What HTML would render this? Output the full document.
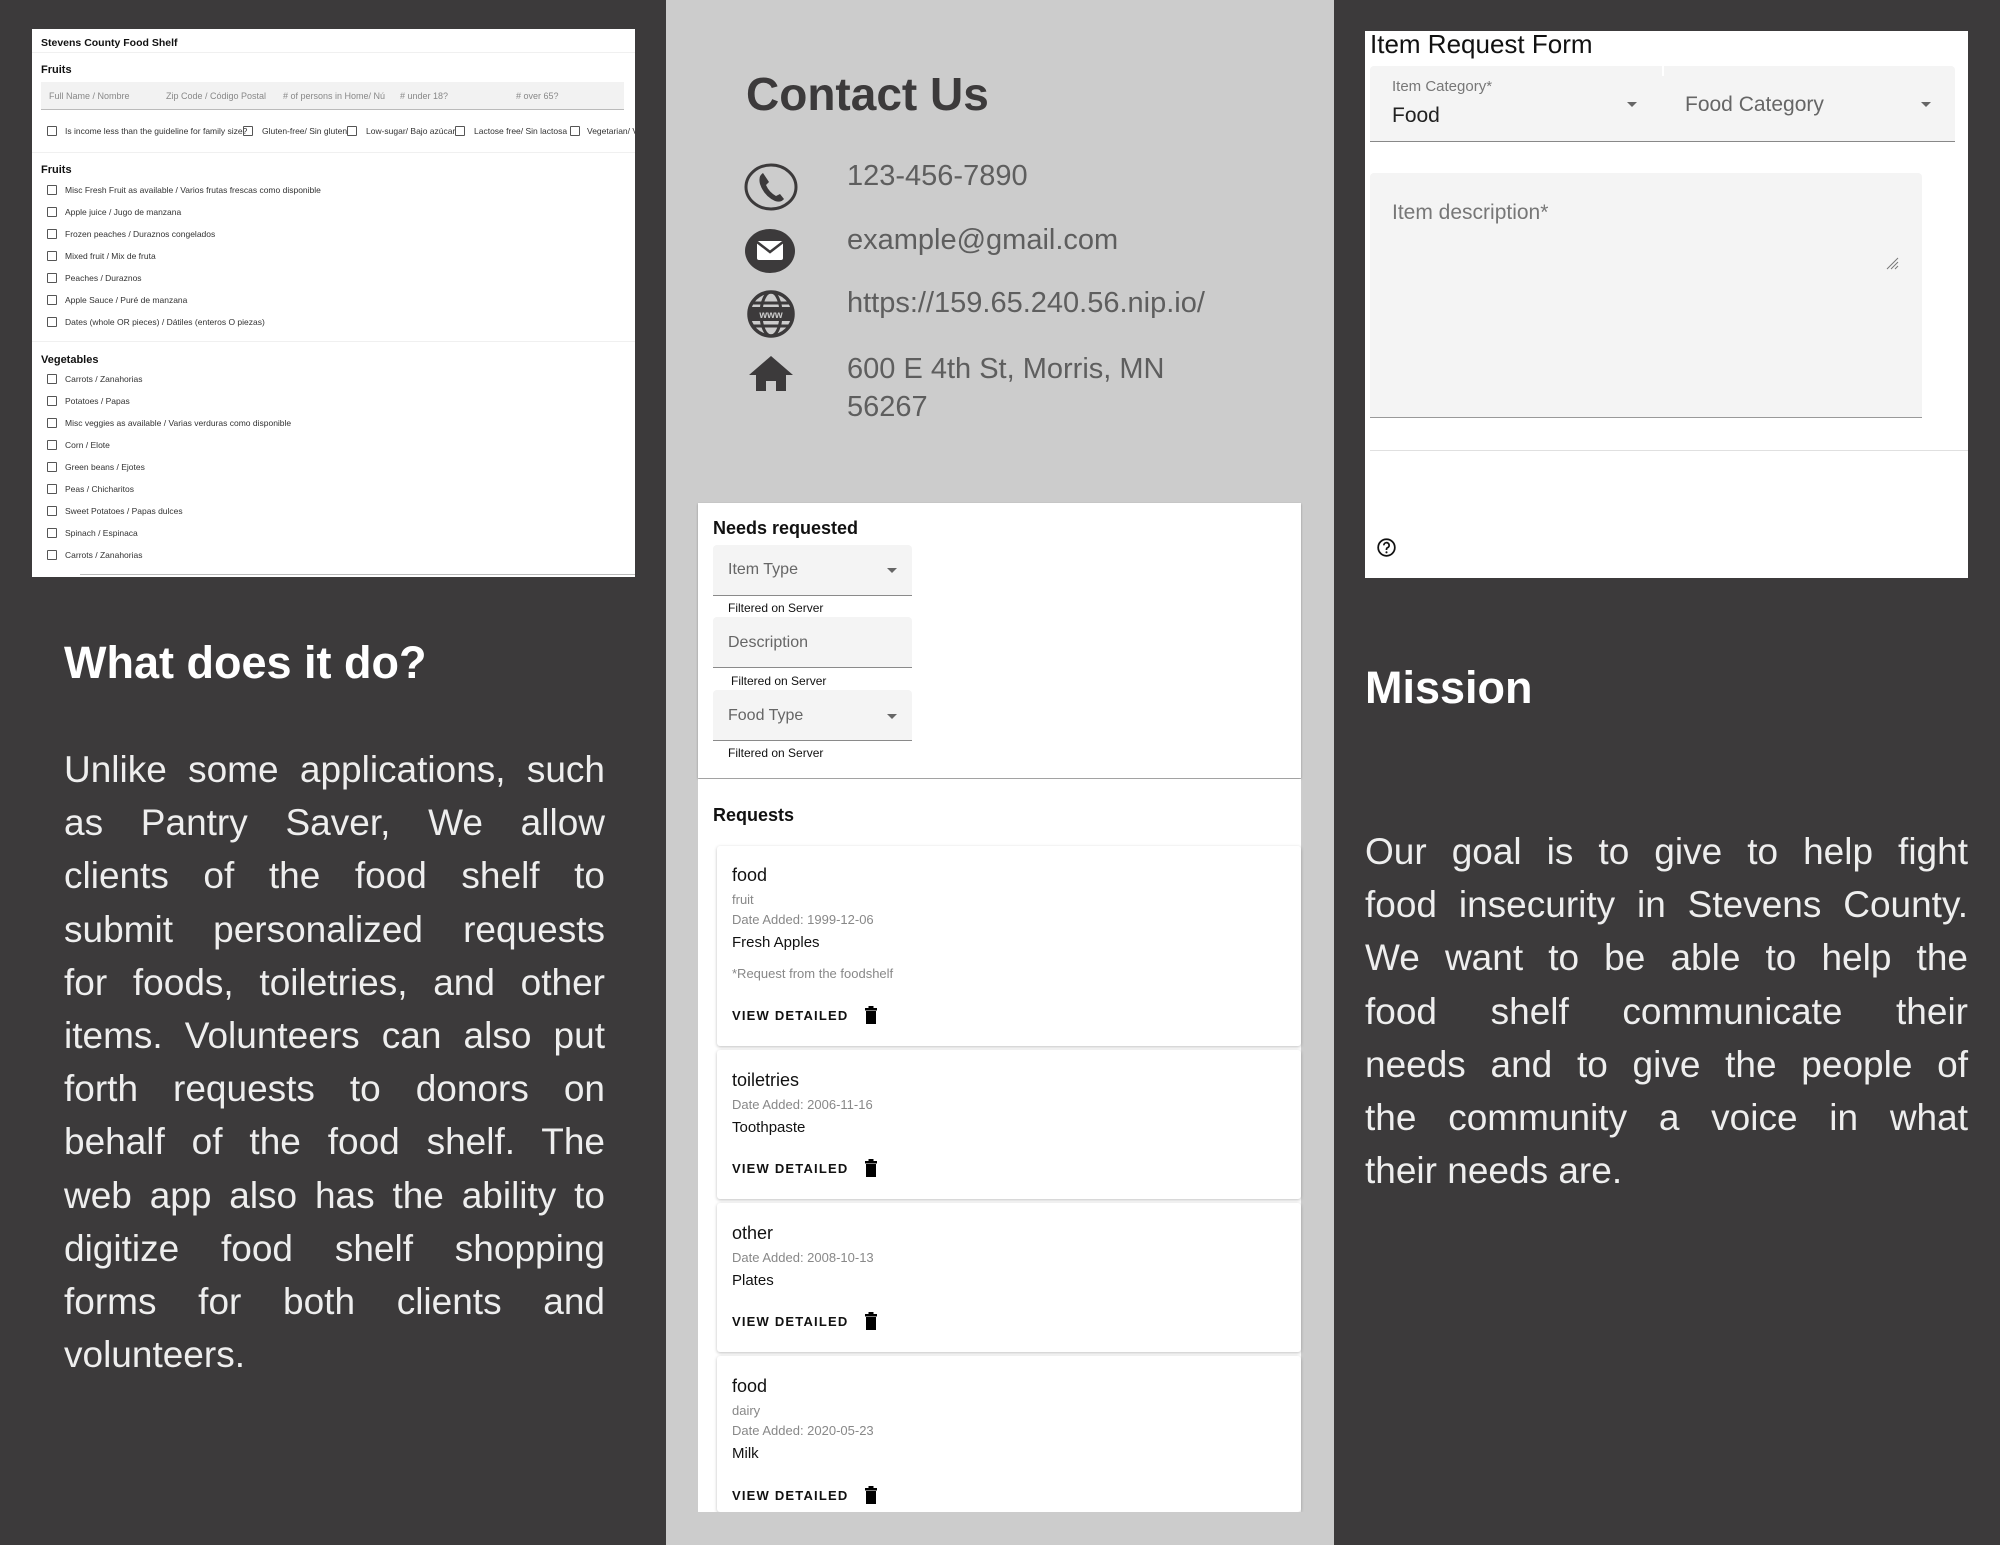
<!DOCTYPE html>
<html><head><meta charset="utf-8"><style>
*{margin:0;padding:0;box-sizing:border-box}
body{width:2000px;height:1545px;position:relative;overflow:hidden;background:#3c3a3b;font-family:"Liberation Sans",sans-serif}
.a{position:absolute;white-space:nowrap}
.cb{position:absolute;width:10px;height:10px;border:1.3px solid #555;border-radius:1px}
.li{position:absolute;font-size:8.5px;color:#333;line-height:10px}
.jp{position:absolute;color:#eeeeee;font-size:37px;line-height:53.2px}
.jp span{display:block;text-align:justify;text-align-last:justify;white-space:nowrap}
.jp span.l{text-align-last:left}
.fld{position:absolute;background:#f4f4f4;border-bottom:1.5px solid #8a8a8a;border-radius:4px 4px 0 0}
.arr{position:absolute;width:0;height:0;border-left:5px solid transparent;border-right:5px solid transparent;border-top:5px solid #666}
.card{position:absolute;left:717px;width:584px;background:#fff;box-shadow:0 1px 3px rgba(0,0,0,.25);border-radius:3px}
.t1{font-size:18px;color:#111;font-weight:500}
.g{font-size:13px;color:#888}
.b{font-size:15px;color:#111}
.vd{font-size:13px;font-weight:bold;letter-spacing:1.2px;color:#111}
</style></head><body>

<div class="a" style="left:666px;top:0;width:668px;height:1545px;background:#cccccc"></div>

<div class="a" style="left:32px;top:29px;width:603px;height:548px;background:#fff;overflow:hidden">
  <div class="a" style="left:9px;top:8px;font-size:10.5px;font-weight:bold;color:#111">Stevens County Food Shelf</div>
  <div class="a" style="left:0;top:23px;width:603px;height:1px;background:#f0f0f0"></div>
  <div class="a" style="left:9px;top:35px;font-size:11px;font-weight:bold;color:#111">Fruits</div>
  <div class="a" style="left:9px;top:53px;width:583px;height:28px;background:#f2f2f2;border-bottom:1px solid #bbb"></div>
  <div class="a" style="left:17px;top:62px;font-size:9px;color:#888">Full Name / Nombre</div>
  <div class="a" style="left:134px;top:62px;font-size:9px;color:#888">Zip Code / Código Postal</div>
  <div class="a" style="left:251px;top:62px;font-size:9px;color:#888"># of persons in Home/ Nú</div>
  <div class="a" style="left:368px;top:62px;font-size:9px;color:#888"># under 18?</div>
  <div class="a" style="left:484px;top:62px;font-size:9px;color:#888"># over 65?</div>
  <div class="cb" style="left:15px;top:97px"></div><div class="li" style="left:33px;top:97px">Is income less than the guideline for family size?</div>
  <div class="cb" style="left:211px;top:97px"></div><div class="li" style="left:230px;top:97px">Gluten-free/ Sin gluten</div>
  <div class="cb" style="left:315px;top:97px"></div><div class="li" style="left:334px;top:97px">Low-sugar/ Bajo azúcar</div>
  <div class="cb" style="left:423px;top:97px"></div><div class="li" style="left:442px;top:97px">Lactose free/ Sin lactosa</div>
  <div class="cb" style="left:538px;top:97px"></div><div class="li" style="left:555px;top:97px">Vegetarian/ Vegetariano</div>
  <div class="a" style="left:0;top:123px;width:603px;height:1px;background:#f0f0f0"></div>
  <div class="a" style="left:9px;top:135px;font-size:11px;font-weight:bold;color:#111">Fruits</div>
  <div class="cb" style="left:15px;top:156px"></div><div class="li" style="left:33px;top:156px">Misc Fresh Fruit as available / Varios frutas frescas como disponible</div>
  <div class="cb" style="left:15px;top:178px"></div><div class="li" style="left:33px;top:178px">Apple juice / Jugo de manzana</div>
  <div class="cb" style="left:15px;top:200px"></div><div class="li" style="left:33px;top:200px">Frozen peaches / Duraznos congelados</div>
  <div class="cb" style="left:15px;top:222px"></div><div class="li" style="left:33px;top:222px">Mixed fruit / Mix de fruta</div>
  <div class="cb" style="left:15px;top:244px"></div><div class="li" style="left:33px;top:244px">Peaches / Duraznos</div>
  <div class="cb" style="left:15px;top:266px"></div><div class="li" style="left:33px;top:266px">Apple Sauce / Puré de manzana</div>
  <div class="cb" style="left:15px;top:288px"></div><div class="li" style="left:33px;top:288px">Dates (whole OR pieces) / Dátiles (enteros O piezas)</div>
  <div class="a" style="left:0;top:312px;width:603px;height:1px;background:#f0f0f0"></div>
  <div class="a" style="left:9px;top:325px;font-size:11px;font-weight:bold;color:#111">Vegetables</div>
  <div class="cb" style="left:15px;top:345px"></div><div class="li" style="left:33px;top:345px">Carrots / Zanahorias</div>
  <div class="cb" style="left:15px;top:367px"></div><div class="li" style="left:33px;top:367px">Potatoes / Papas</div>
  <div class="cb" style="left:15px;top:389px"></div><div class="li" style="left:33px;top:389px">Misc veggies as available / Varias verduras como disponible</div>
  <div class="cb" style="left:15px;top:411px"></div><div class="li" style="left:33px;top:411px">Corn / Elote</div>
  <div class="cb" style="left:15px;top:433px"></div><div class="li" style="left:33px;top:433px">Green beans / Ejotes</div>
  <div class="cb" style="left:15px;top:455px"></div><div class="li" style="left:33px;top:455px">Peas / Chicharitos</div>
  <div class="cb" style="left:15px;top:477px"></div><div class="li" style="left:33px;top:477px">Sweet Potatoes / Papas dulces</div>
  <div class="cb" style="left:15px;top:499px"></div><div class="li" style="left:33px;top:499px">Spinach / Espinaca</div>
  <div class="cb" style="left:15px;top:521px"></div><div class="li" style="left:33px;top:521px">Carrots / Zanahorias</div>
  <div class="a" style="left:48px;top:545px;width:555px;height:1px;background:#bbb"></div>
</div>

<div class="a" style="left:64px;top:637px;font-size:45px;font-weight:bold;color:#fff">What does it do?</div>
<div class="jp" style="left:64px;top:743px;width:541px">
<span>Unlike some applications, such</span>
<span>as Pantry Saver, We allow</span>
<span>clients of the food shelf to</span>
<span>submit personalized requests</span>
<span>for foods, toiletries, and other</span>
<span>items. Volunteers can also put</span>
<span>forth requests to donors on</span>
<span>behalf of the food shelf. The</span>
<span>web app also has the ability to</span>
<span>digitize food shelf shopping</span>
<span>forms for both clients and</span>
<span class="l">volunteers.</span>
</div>

<div class="a" style="left:746px;top:67px;font-size:46px;font-weight:bold;color:#3c3a3b">Contact Us</div>
<svg class="a" style="left:744px;top:160px" width="56" height="280" viewBox="0 0 56 280">
  <ellipse cx="27" cy="27" rx="25" ry="22" fill="none" stroke="#3c3a3b" stroke-width="3"/>
  <path d="M19 13 q-5 3 -3 11 q4 12 15 17 q6 2 9 -2 l-4 -5 l-4 2 q-7 -4 -10 -11 l3 -3 z" fill="#3c3a3b"/>
  <ellipse cx="26" cy="91" rx="25" ry="22" fill="#3c3a3b"/>
  <rect x="13" y="81" width="26" height="19" rx="2" fill="#fff"/>
  <path d="M13 82 l13 10 l13 -10" fill="none" stroke="#3c3a3b" stroke-width="2.5"/>
  <circle cx="27" cy="154" r="22" fill="none" stroke="#3c3a3b" stroke-width="3.5"/>
  <ellipse cx="27" cy="154" rx="10" ry="22" fill="none" stroke="#3c3a3b" stroke-width="3"/>
  <line x1="5" y1="154" x2="49" y2="154" stroke="#3c3a3b" stroke-width="3"/>
  <line x1="9" y1="143" x2="45" y2="143" stroke="#3c3a3b" stroke-width="3"/>
  <line x1="9" y1="166" x2="45" y2="166" stroke="#3c3a3b" stroke-width="3"/>
  <rect x="6" y="147" width="42" height="14" fill="#3c3a3b"/>
  <text x="27" y="158" font-size="10" font-weight="bold" fill="#ccc" text-anchor="middle" font-family="Liberation Sans">www</text>
  <path d="M27 196 l22 19 h-7 v16 h-10 v-10 h-10 v10 h-10 v-16 h-7 z" fill="#3c3a3b"/>
</svg>
<div class="a" style="left:847px;top:160px;font-size:29px;color:#5e5e5e">123-456-7890</div>
<div class="a" style="left:847px;top:224px;font-size:29px;color:#5e5e5e">example@gmail.com</div>
<div class="a" style="left:847px;top:287px;font-size:29px;color:#5e5e5e">https://159.65.240.56.nip.io/</div>
<div class="a" style="left:847px;top:350px;font-size:29px;color:#5e5e5e;line-height:38px;white-space:normal;width:320px">600 E 4th St, Morris, MN 56267</div>

<div class="a" style="left:698px;top:503px;width:603px;height:275px;background:#fff;box-shadow:0 1px 2px rgba(0,0,0,.3)"></div>
<div class="a" style="left:713px;top:518px;font-size:18px;font-weight:bold;color:#111">Needs requested</div>
<div class="fld" style="left:713px;top:545px;width:199px;height:51px"></div>
<div class="a" style="left:728px;top:561px;font-size:16px;color:#666">Item Type</div>
<div class="arr" style="left:887px;top:568px"></div>
<div class="a" style="left:728px;top:601px;font-size:12px;color:#111">Filtered on Server</div>
<div class="fld" style="left:713px;top:617px;width:199px;height:51px"></div>
<div class="a" style="left:728px;top:634px;font-size:16px;color:#666">Description</div>
<div class="a" style="left:731px;top:674px;font-size:12px;color:#111">Filtered on Server</div>
<div class="fld" style="left:713px;top:690px;width:199px;height:51px"></div>
<div class="a" style="left:728px;top:707px;font-size:16px;color:#666">Food Type</div>
<div class="arr" style="left:887px;top:714px"></div>
<div class="a" style="left:728px;top:746px;font-size:12px;color:#111">Filtered on Server</div>

<div class="a" style="left:698px;top:779px;width:603px;height:766px;background:#fff"></div>
<div class="a" style="left:713px;top:805px;font-size:18px;font-weight:bold;color:#111">Requests</div>

<div class="card" style="top:846px;height:200px"></div>
<div class="a t1" style="left:732px;top:865px">food</div>
<div class="a g" style="left:732px;top:892px">fruit</div>
<div class="a g" style="left:732px;top:912px">Date Added: 1999-12-06</div>
<div class="a b" style="left:732px;top:934px">Fresh Apples</div>
<div class="a g" style="left:732px;top:966px">*Request from the foodshelf</div>
<div class="a vd" style="left:732px;top:1008px">VIEW DETAILED</div>

<div class="card" style="top:1050px;height:149px"></div>
<div class="a t1" style="left:732px;top:1070px">toiletries</div>
<div class="a g" style="left:732px;top:1097px">Date Added: 2006-11-16</div>
<div class="a b" style="left:732px;top:1119px">Toothpaste</div>
<div class="a vd" style="left:732px;top:1161px">VIEW DETAILED</div>

<div class="card" style="top:1203px;height:149px"></div>
<div class="a t1" style="left:732px;top:1223px">other</div>
<div class="a g" style="left:732px;top:1250px">Date Added: 2008-10-13</div>
<div class="a b" style="left:732px;top:1272px">Plates</div>
<div class="a vd" style="left:732px;top:1314px">VIEW DETAILED</div>

<div class="card" style="top:1356px;height:156px"></div>
<div class="a t1" style="left:732px;top:1376px">food</div>
<div class="a g" style="left:732px;top:1403px">dairy</div>
<div class="a g" style="left:732px;top:1423px">Date Added: 2020-05-23</div>
<div class="a b" style="left:732px;top:1445px">Milk</div>
<div class="a vd" style="left:732px;top:1488px">VIEW DETAILED</div>
<div class="a" style="left:666px;top:1512px;width:668px;height:33px;background:#ccc"></div>

<svg class="a" style="left:864px;top:1006px" width="14" height="500" viewBox="0 0 14 500">
  <g fill="#000">
    <rect x="1" y="2" width="12" height="2.5"/><rect x="4.5" y="0" width="5" height="2.5"/><path d="M2 5h10v13h-10z"/>
    <g transform="translate(0,153)"><rect x="1" y="2" width="12" height="2.5"/><rect x="4.5" y="0" width="5" height="2.5"/><path d="M2 5h10v13h-10z"/></g>
    <g transform="translate(0,306)"><rect x="1" y="2" width="12" height="2.5"/><rect x="4.5" y="0" width="5" height="2.5"/><path d="M2 5h10v13h-10z"/></g>
    <g transform="translate(0,480)"><rect x="1" y="2" width="12" height="2.5"/><rect x="4.5" y="0" width="5" height="2.5"/><path d="M2 5h10v13h-10z"/></g>
  </g>
</svg>

<div class="a" style="left:1365px;top:31px;width:603px;height:547px;background:#fff"></div>
<div class="a" style="left:1370px;top:29px;font-size:26px;color:#111">Item Request Form</div>
<div class="fld" style="left:1370px;top:66px;width:585px;height:76px;border-bottom-color:#888"></div>
<div class="a" style="left:1662px;top:66px;width:2px;height:10px;background:#fff"></div>
<div class="a" style="left:1392px;top:78px;font-size:15px;color:#777">Item Category*</div>
<div class="a" style="left:1392px;top:104px;font-size:21px;color:#222">Food</div>
<div class="arr" style="left:1627px;top:102px"></div>
<div class="a" style="left:1685px;top:93px;font-size:21px;color:#666">Food Category</div>
<div class="arr" style="left:1921px;top:102px"></div>
<div class="fld" style="left:1370px;top:173px;width:552px;height:245px;border-bottom-color:#999"></div>
<div class="a" style="left:1392px;top:201px;font-size:21px;color:#777">Item description*</div>
<svg class="a" style="left:1885px;top:256px" width="14" height="14"><path d="M2 13L13 2M6 13L13 6M10 13L13 10" stroke="#777" stroke-width="1"/></svg>
<div class="a" style="left:1370px;top:450px;width:598px;height:1px;background:#e0e0e0"></div>
<svg class="a" style="left:1376px;top:537px" width="21" height="21" viewBox="0 0 24 24"><circle cx="12" cy="12" r="9.5" fill="none" stroke="#111" stroke-width="2"/><path d="M9 9.5a3 3 0 1 1 4 2.8c-.8.4-1 1-1 1.7v.8" fill="none" stroke="#111" stroke-width="2"/><circle cx="12" cy="17.5" r="1.2" fill="#111"/></svg>

<div class="a" style="left:1365px;top:662px;font-size:45px;font-weight:bold;color:#fff">Mission</div>
<div class="jp" style="left:1365px;top:825px;width:603px">
<span>Our goal is to give to help fight</span>
<span>food insecurity in Stevens County.</span>
<span>We want to be able to help the</span>
<span>food shelf communicate their</span>
<span>needs and to give the people of</span>
<span>the community a voice in what</span>
<span class="l">their needs are.</span>
</div>
</body></html>
